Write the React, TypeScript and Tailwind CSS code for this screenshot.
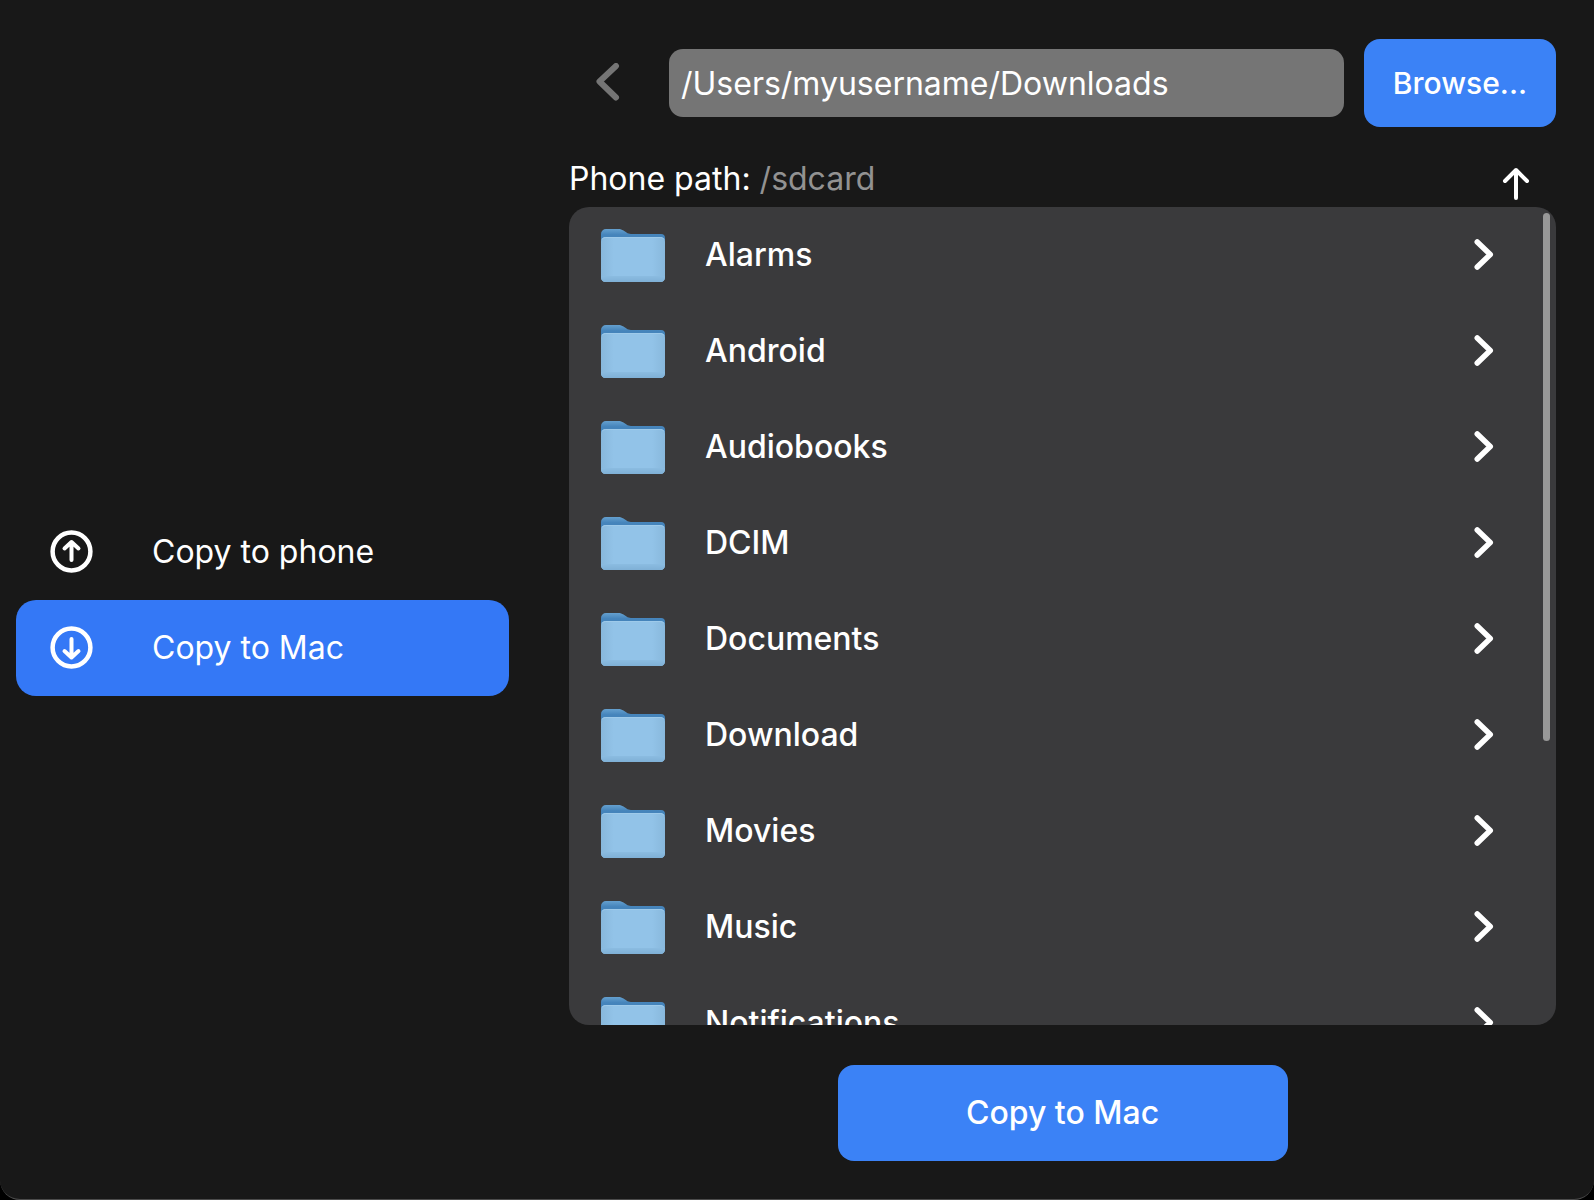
import { useState } from "react";

const folders = [
  "Alarms",
  "Android",
  "Audiobooks",
  "DCIM",
  "Documents",
  "Download",
  "Movies",
  "Music",
  "Notifications",
];

function FolderIcon() {
  return (
    <svg width="64" height="56" viewBox="0 0 64 56" aria-hidden="true" className="shrink-0">
      <defs>
        <linearGradient id="folder-back" x1="0" y1="0" x2="0" y2="1">
          <stop offset="0" stopColor="#65a0cf" />
          <stop offset="0.2" stopColor="#4584bb" />
          <stop offset="1" stopColor="#4584bb" />
        </linearGradient>
        <linearGradient id="folder-front" x1="0" y1="0" x2="1" y2="0">
          <stop offset="0" stopColor="#88b8dc" />
          <stop offset="0.2" stopColor="#92c3e8" />
          <stop offset="0.8" stopColor="#92c3e8" />
          <stop offset="1" stopColor="#88b8dc" />
        </linearGradient>
        <linearGradient id="folder-base" x1="0" y1="0" x2="0" y2="1">
          <stop offset="0" stopColor="#8bbce1" />
          <stop offset="1" stopColor="#7fb0d6" />
        </linearGradient>
      </defs>
      <g transform="translate(0 2)">
        <path
          d="M0 5a5 5 0 0 1 5-5h12.500c2 0 3.300.5 5 1.600l3 2c1.500 1 2.500 1.400 4.500 1.400H60a4 4 0 0 1 4 4v20H0z"
          fill="url(#folder-back)"
        />
        <rect x="0" y="8" width="64" height="45" rx="4.500" fill="url(#folder-front)" />
        <path d="M0 47h64v1.500a4.500 4.500 0 0 1-4.500 4.500h-55A4.500 4.500 0 0 1 0 48.500z" fill="url(#folder-base)" />
        <path d="M1 10.500Q2 8.500 4.500 8.500h55Q62 8.500 63 10.500" fill="none" stroke="#9ecaea" />
      </g>
    </svg>
  );
}

function ChevronRight() {
  return (
    <svg width="20" height="32" viewBox="0 0 20 32" fill="none" stroke="white" strokeWidth="5.500" strokeLinecap="round" strokeLinejoin="round" aria-hidden="true">
      <path d="M3.250 3L16.250 15.500L3.250 28" />
    </svg>
  );
}

function CircleArrow({ down = false }: { down?: boolean }) {
  return (
    <svg width="42" height="42" viewBox="0 0 42 42" fill="none" stroke="white" strokeWidth="4" strokeLinecap="round" strokeLinejoin="round" aria-hidden="true" className="overflow-visible">
      <circle cx="21.500" cy="20.500" r="18.900" strokeWidth="4.500" />
      <path d={down ? "M21.500 12v18M14.500 24l7 6.500l7-6.500" : "M21.500 29V11M14.500 17.500l7-6.500l7 6.500"} />
    </svg>
  );
}

export default function App() {
  const [path, setPath] = useState("/Users/myusername/Downloads");
  return (
    <div className="h-screen bg-black font-['Inter',sans-serif] text-[32px] leading-[40px] text-white">
      <div className="flex h-full rounded-b-[20px] border-b border-[#4b4b4b] bg-[#181818]">
        <nav aria-label="Copy direction" className="flex w-[525px] shrink-0 flex-col justify-center px-4">
          <button type="button" className="flex h-24 items-center gap-[60px] rounded-[20px] pl-[34px] text-left">
            <CircleArrow />
            Copy to phone
          </button>
          <button type="button" aria-current="page" className="flex h-24 items-center gap-[60px] rounded-[20px] bg-[#3478f6] pl-[34px] text-left">
            <CircleArrow down />
            Copy to Mac
          </button>
        </nav>

        <main className="flex min-w-0 flex-1 flex-col pt-[39px] pr-[38px] pb-[38px] pl-11">
          <div className="flex items-center">
            <button type="button" aria-label="Back" className="flex h-16 w-[100px] items-center pl-[26px]">
              <svg width="26" height="40" viewBox="0 0 26 40" fill="none" stroke="#757575" strokeWidth="6" strokeLinecap="round" strokeLinejoin="round" aria-hidden="true">
                <path d="M21 3L4.500 18.500L21 34.500" />
              </svg>
            </button>
            <input
              aria-label="Mac folder"
              value={path}
              onChange={(e) => setPath(e.target.value)}
              className="h-[68px] min-w-0 flex-1 rounded-[14px] bg-[#757575] px-3 outline-none"
            />
            <button type="button" className="ml-5 h-[88px] w-48 rounded-2xl bg-[#3b82f6] text-[30px] font-medium">
              Browse...
            </button>
          </div>

          <div className="flex h-20 items-end justify-between">
            <p className="pb-2">
              Phone path: <span className="text-[#929292]">/sdcard</span>
            </p>
            <button type="button" aria-label="Up one folder" className="mr-[26px] pb-[6px]">
              <svg width="28" height="34" viewBox="0 0 28 34" fill="none" stroke="white" strokeWidth="4" strokeLinecap="round" strokeLinejoin="round" aria-hidden="true">
                <path d="M14 31V3M3 14L14 3L25 14" />
              </svg>
            </button>
          </div>

          <div className="relative min-h-0 flex-1 overflow-hidden rounded-[20px] bg-[#3a3a3c]">
            <ul className="h-full overflow-y-auto [scrollbar-width:none]">
              {folders.map((name) => (
                <li key={name}>
                  <button type="button" className="flex h-24 w-full items-center pr-[62px] pl-8 text-left font-medium">
                    <FolderIcon />
                    <span className="ml-10 flex-1">{name}</span>
                    <ChevronRight />
                  </button>
                </li>
              ))}
            </ul>
            <div className="absolute top-[6px] right-[6px] h-[528px] w-[7px] rounded-full bg-[#989898]" />
          </div>

          <button type="button" className="mt-10 h-24 w-[450px] shrink-0 self-center rounded-2xl bg-[#3b82f6] font-medium">
            Copy to Mac
          </button>
        </main>
      </div>
    </div>
  );
}
